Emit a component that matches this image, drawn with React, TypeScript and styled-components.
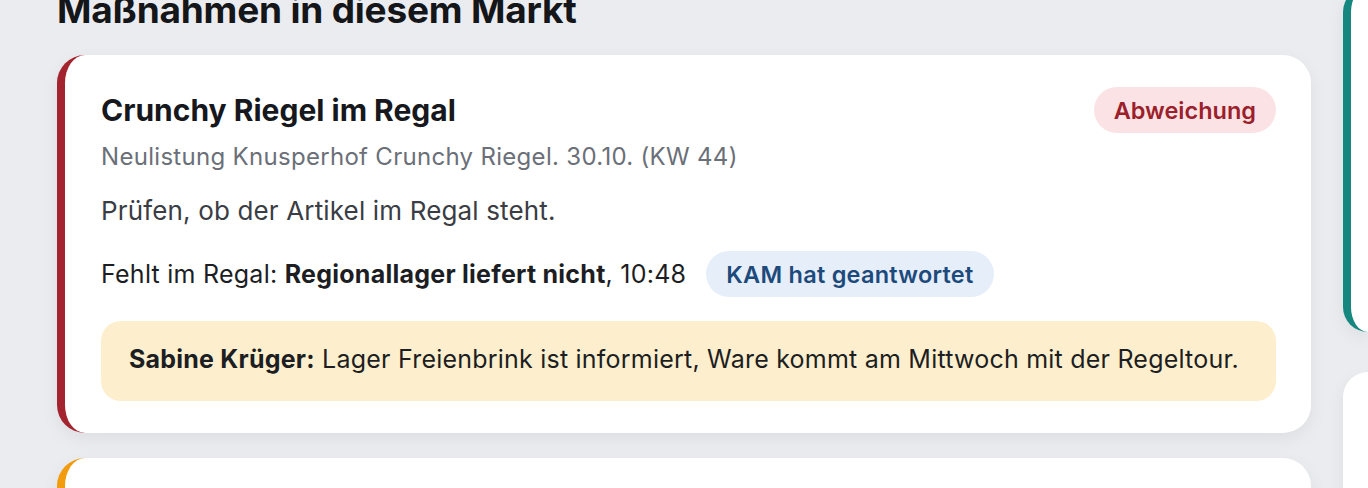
import React from "react";
import styled, { createGlobalStyle } from "styled-components";

const GlobalStyle = createGlobalStyle`
  html, body {
    margin: 0;
    padding: 0;
    background: #ebecef;
    font-family: Inter, "Noto Sans", sans-serif;
    overflow: hidden;
  }
`;

const Page = styled.div`
  display: grid;
  grid-template-columns: 1254px 1fr;
  column-gap: 32px;
  padding-left: 57px;
  margin-top: -11px;
`;

const Main = styled.main`
  display: flex;
  flex-direction: column;
  gap: 25px;
`;

const Heading = styled.h2`
  margin: 0 0 -1px;
  font-size: 37px;
  line-height: 42px;
  font-weight: 700;
  color: #14161a;
  letter-spacing: -0.2px;
`;

const Card = styled.article<{ $accent: string }>`
  background: #fff;
  border-left: 8px solid ${(p) => p.$accent};
  border-radius: 28px;
  padding: 32px 35px 32px 36px;
  box-shadow: 0 6px 18px rgba(20, 24, 40, 0.06);
  display: flex;
  flex-direction: column;
`;

const TitleRow = styled.div`
  display: flex;
  align-items: center;
  justify-content: space-between;
`;

const Title = styled.h3`
  margin: 0;
  font-size: 30px;
  font-weight: 700;
  color: #16181d;
`;

const Pill = styled.span<{ $bg: string; $fg: string }>`
  display: inline-flex;
  align-items: center;
  height: 46px;
  padding: 0 20px;
  border-radius: 24px;
  background: ${(p) => p.$bg};
  color: ${(p) => p.$fg};
  font-size: 23.5px;
  font-weight: 600;
  white-space: nowrap;
`;

const Sub = styled.p`
  margin: 9px 0 0;
  font-size: 24px;
  line-height: 30px;
  color: #6b6f78;
  letter-spacing: 0.3px;
`;

const Body = styled.p`
  margin: 23px 0 0;
  font-size: 26px;
  line-height: 32px;
  color: #3a3d44;
  letter-spacing: 0.15px;
`;

const Meta = styled.div`
  margin-top: 24px;
  display: flex;
  align-items: center;
  gap: 20px;
  font-size: 25px;
  color: #1c1e23;
  letter-spacing: 0.25px;

  b {
    font-weight: 700;
  }
`;

const Note = styled.div`
  margin-top: 24px;
  background: #fdefcd;
  border-radius: 20px;
  padding: 23px 28px 26px;
  font-size: 25px;
  line-height: 31px;
  color: #1c1e23;
  letter-spacing: 0.22px;

  b {
    font-weight: 700;
  }
`;

const Side = styled.aside`
  display: flex;
  flex-direction: column;
  gap: 40px;
  margin-top: -2px;
`;

const SideCard = styled.div<{ $accent?: string; $h: number }>`
  background: #fff;
  height: ${(p) => p.$h}px;
  border-left: ${(p) => (p.$accent ? `8px solid ${p.$accent}` : "none")};
  border-radius: 28px 0 0 28px;
  box-shadow: 0 6px 18px rgba(20, 24, 40, 0.06);
`;

export default function App() {
  return (
    <>
      <GlobalStyle />
      <Page>
        <Main>
          <Heading>Maßnahmen in diesem Markt</Heading>
          <Card $accent="#a3232f">
            <TitleRow>
              <Title>Crunchy Riegel im Regal</Title>
              <Pill $bg="#fbe3e5" $fg="#9c1f2c">
                Abweichung
              </Pill>
            </TitleRow>
            <Sub>Neulistung Knusperhof Crunchy Riegel. 30.10. (KW 44)</Sub>
            <Body>Prüfen, ob der Artikel im Regal steht.</Body>
            <Meta>
              <span>
                Fehlt im Regal: <b>Regionallager liefert nicht</b>, 10:48
              </span>
              <Pill $bg="#e6eef9" $fg="#1d4a7c">
                KAM hat geantwortet
              </Pill>
            </Meta>
            <Note>
              <b>Sabine Krüger:</b> Lager Freienbrink ist informiert, Ware
              kommt am Mittwoch mit der Regeltour.
            </Note>
          </Card>
          <Card $accent="#f29b0c" style={{ height: 200 }} />
        </Main>
        <Side>
          <SideCard $accent="#16877e" $h={345} />
          <SideCard $h={200} />
        </Side>
      </Page>
    </>
  );
}
